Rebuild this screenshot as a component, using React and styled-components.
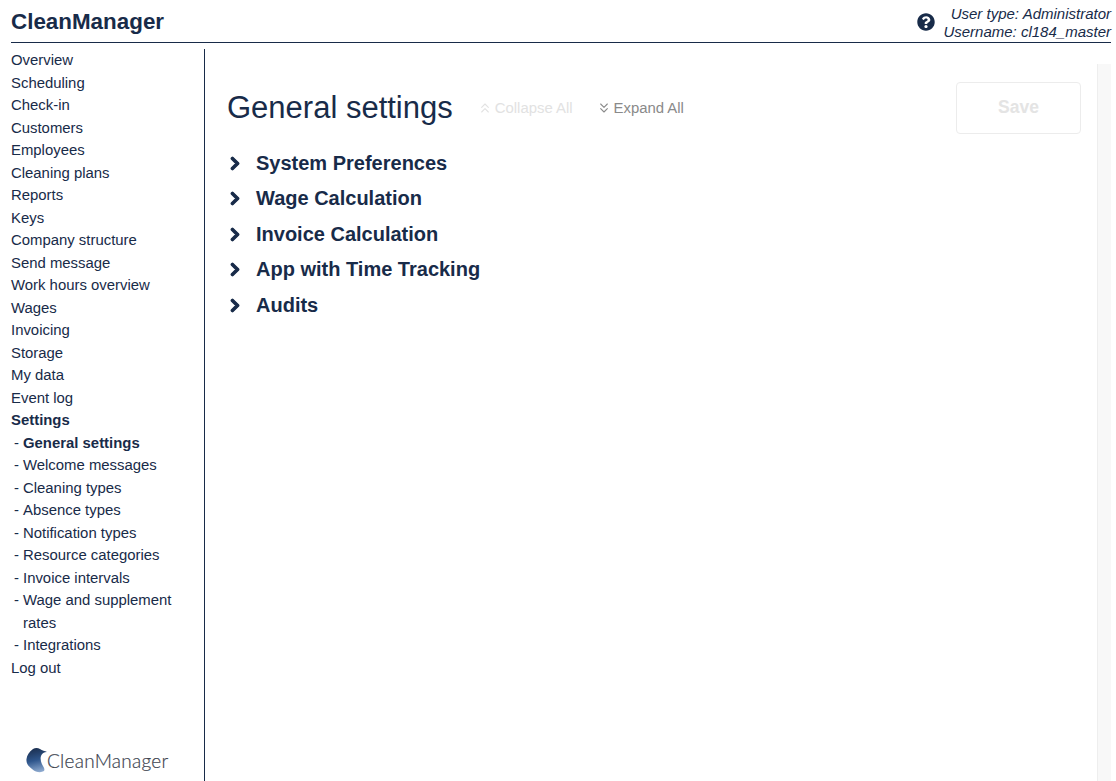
import React from "react";
import styled, { createGlobalStyle } from "styled-components";
import { FaQuestionCircle, FaChevronRight } from "react-icons/fa";
import { ChevronsUp, ChevronsDown } from "lucide-react";

const navy = "#182b49";

const GlobalStyle = createGlobalStyle`
  html, body {
    margin: 0;
    padding: 0;
    height: 100%;
    background: #fff;
    overflow: hidden;
  }
  body {
    font-family: "Liberation Sans", Arial, sans-serif;
    color: ${navy};
  }
`;

const Page = styled.div`
  display: flex;
  flex-direction: column;
  height: 781px;
  padding: 0 5px 0 11px;
  box-sizing: border-box;
`;

const Header = styled.header`
  display: flex;
  align-items: center;
  justify-content: space-between;
  height: 43px;
  box-sizing: border-box;
  border-bottom: 1px solid ${navy};
`;

const Brand = styled.h1`
  margin: 2px 0 0;
  font-size: 22.4px;
  font-weight: 700;
  line-height: 26px;
  color: ${navy};
`;

const UserBox = styled.div`
  display: flex;
  align-items: center;
  gap: 8px;
  padding-top: 2px;
  svg {
    font-size: 18px;
    color: ${navy};
  }
`;

const UserText = styled.div`
  font-size: 15px;
  font-style: italic;
  line-height: 18px;
  text-align: right;
  margin-top: 2px;
`;

const Body = styled.div`
  flex: 1;
  display: flex;
  min-height: 0;
  padding-top: 6px;
`;

const Sidebar = styled.aside`
  width: 193px;
  flex: none;
  display: flex;
  flex-direction: column;
  justify-content: space-between;
  border-right: 1px solid ${navy};
`;

const Menu = styled.ul`
  list-style: none;
  margin: 0;
  padding: 0;
`;

const MenuItem = styled.li`
  font-size: 14.9px;
  line-height: 22.5px;
  font-weight: ${(p) => (p.$active ? 700 : 400)};
`;

const SubItem = styled.li`
  display: flex;
  font-size: 14.9px;
  line-height: 22.5px;
  padding-left: 3px;
  padding-right: 20px;
  font-weight: ${(p) => (p.$active ? 700 : 400)};
  &::before {
    content: "-";
    font-weight: 400;
    width: 9px;
    flex: none;
  }
`;

const FooterLogo = styled.div`
  display: flex;
  align-items: center;
  padding: 0 0 5px 15px;
  height: 32px;
  span {
    font-family: Lato, sans-serif;
    font-weight: 300;
    font-size: 19px;
    color: #3d4450;
    letter-spacing: 0.25px;
    -webkit-text-stroke: 0.2px #3d4450;
  }
`;

const Main = styled.main`
  flex: 1;
  display: flex;
  min-width: 0;
`;

const Content = styled.div`
  flex: 1;
  padding: 33px 16px 0 22px;
`;

const TitleRow = styled.div`
  display: flex;
  align-items: center;
  height: 52px;
`;

const Title = styled.h2`
  margin: 0 24px 0 0;
  font-size: 31px;
  font-weight: 400;
  color: ${navy};
`;

const ToggleLink = styled.button`
  display: inline-flex;
  align-items: center;
  gap: 2px;
  margin-right: 23px;
  padding: 0;
  border: 0;
  background: none;
  font: inherit;
  font-size: 14.9px;
  color: ${(p) => (p.disabled ? "#e2e2e2" : "#8a8a8a")};
`;

const SaveButton = styled.button`
  margin-left: auto;
  width: 125px;
  height: 52px;
  padding: 0 0 2px;
  border: 1px solid #ececec;
  border-radius: 4px;
  background: #fff;
  font: inherit;
  font-size: 17.5px;
  font-weight: 700;
  color: #e4e4e4;
`;

const Sections = styled.div`
  margin-top: 12px;
`;

const Section = styled.div`
  display: flex;
  align-items: center;
  height: 35.5px;
  margin-top: -0.15px;
  font-size: 20px;
  font-weight: 700;
  svg {
    font-size: 15px;
    margin-right: 14px;
    width: 15px;
    padding-left: 1px;
    box-sizing: border-box;
    stroke: ${navy};
    stroke-width: 40px;
  }
`;

const Track = styled.div`
  width: 14px;
  flex: none;
  margin-top: 15px;
  background: #f8f8f8;
  border-left: 1px solid #eeeeee;
  box-sizing: border-box;
`;

const menu = [
  "Overview", "Scheduling", "Check-in", "Customers", "Employees", "Cleaning plans",
  "Reports", "Keys", "Company structure", "Send message", "Work hours overview",
  "Wages", "Invoicing", "Storage", "My data", "Event log",
];

const subMenu = [
  "General settings", "Welcome messages", "Cleaning types", "Absence types",
  "Notification types", "Resource categories", "Invoice intervals",
  "Wage and supplement rates", "Integrations",
];

const sections = [
  "System Preferences", "Wage Calculation", "Invoice Calculation",
  "App with Time Tracking", "Audits",
];

function LogoMark() {
  return (
    <svg width="21" height="26" viewBox="0 0 21 26">
      <defs>
        <linearGradient id="wing" x1="0.4" y1="0" x2="0.6" y2="1">
          <stop offset="0" stopColor="#1b2f50" />
          <stop offset="0.5" stopColor="#2f568c" />
          <stop offset="1" stopColor="#8fabd0" />
        </linearGradient>
      </defs>
      <path
        d="M0.5 12C1 8 3 5 7 2C9 0.5 12 0.5 14 2C16 3.5 19 4 21 5C18 5 16 6.500 15 9C14 12 15 16 17 19C18 21 19 22 18 24C15 26 10 25.500 6 22C2 19 0 16 0.5 12Z"
        fill="url(#wing)"
      />
    </svg>
  );
}

export default function App() {
  return (
    <>
      <GlobalStyle />
      <Page>
        <Header>
          <Brand>CleanManager</Brand>
          <UserBox>
            <FaQuestionCircle />
            <UserText>
              User type: Administrator
              <br />
              Username: cl184_master
            </UserText>
          </UserBox>
        </Header>
        <Body>
          <Sidebar>
            <Menu>
              {menu.map((m) => (
                <MenuItem key={m}>{m}</MenuItem>
              ))}
              <MenuItem $active>Settings</MenuItem>
              {subMenu.map((m, i) => (
                <SubItem key={m} $active={i === 0}>
                  <span>{m}</span>
                </SubItem>
              ))}
              <MenuItem>Log out</MenuItem>
            </Menu>
            <FooterLogo>
              <LogoMark />
              <span>CleanManager</span>
            </FooterLogo>
          </Sidebar>
          <Main>
            <Content>
              <TitleRow>
                <Title>General settings</Title>
                <ToggleLink disabled>
                  <ChevronsUp size={16} strokeWidth={1.6} />
                  Collapse All
                </ToggleLink>
                <ToggleLink>
                  <ChevronsDown size={16} strokeWidth={1.6} />
                  Expand All
                </ToggleLink>
                <SaveButton disabled>Save</SaveButton>
              </TitleRow>
              <Sections>
                {sections.map((s) => (
                  <Section key={s}>
                    <FaChevronRight />
                    {s}
                  </Section>
                ))}
              </Sections>
            </Content>
            <Track />
          </Main>
        </Body>
      </Page>
    </>
  );
}
